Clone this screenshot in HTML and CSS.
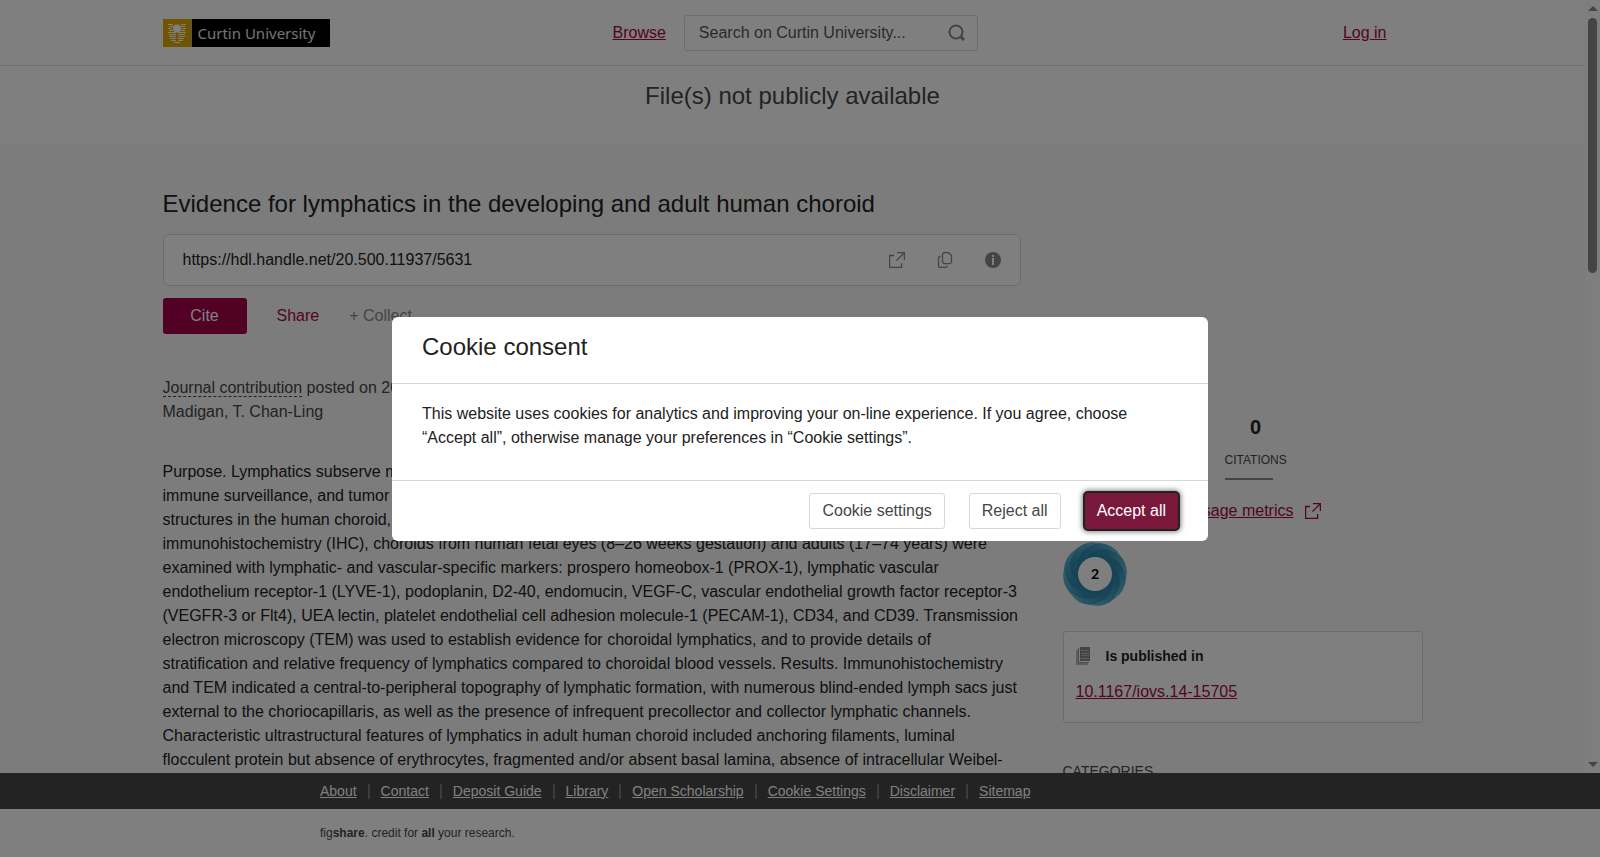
FILE: index.html
```html
<!DOCTYPE html>
<html lang="en">
<head>
    <meta charset="UTF-8">
    <meta name="viewport" content="width=device-width, initial-scale=1.0">
    <title>Evidence for lymphatics in the developing and adult human choroid</title>
    <link rel="stylesheet" href="styles.css">
</head>
<body>
    <div class="viewport">
        <div class="page">
            <header class="header">
                <div class="container header-row">
                    <a class="logo" href="#">
                        <svg class="logo-crest" viewBox="0 0 28 28" width="29" height="28">
                            <path fill="#fff" d="M5 5h5v1H5zM18 5h5v1h-5zM6 7h4v1H6zM18 7h4v1h-4zM5 9h4v1H5zM19 9h4v1h-4zM6 11h4v1H6zM18 11h4v1h-4zM5 13h8v1H5zM15 13h8v1h-8zM6 15h7v1H6zM15 15h7v1h-7zM6 17h7v1H6zM15 17h7v1h-7zM7 19h6v1H7zM15 19h6v1h-6zM8 21h5v1H8zM15 21h5v1h-5zM11 23h6v1h-6z"/>
                            <circle cx="14" cy="9.500" r="4" fill="#fff"/>
                        </svg>
                        <span class="logo-name">Curtin University</span>
                    </a>
                    <a class="link" href="#">Browse</a>
                    <form class="search">
                        <input type="text" aria-label="Search" placeholder="Search on Curtin University...">
                        <button type="submit" aria-label="Submit search">
                            <svg viewBox="0 0 18 18" width="18" height="18" fill="none" stroke="#888" stroke-width="2">
                                <circle cx="8" cy="8" r="6.500"/>
                                <path d="M12.500 12.500l3.500 3.500" stroke-width="3"/>
                            </svg>
                        </button>
                    </form>
                    <a class="link login" href="#">Log in</a>
                </div>
            </header>

            <div class="file-notice">File(s) not publicly available</div>

            <div class="container content">
                <main class="main">
                    <h1>Evidence for lymphatics in the developing and adult human choroid</h1>
                    <div class="handle">
                        <span class="handle-url">https://hdl.handle.net/20.500.11937/5631</span>
                        <button type="button" aria-label="Open link">
                            <svg viewBox="0 0 16 16" width="16" height="16" fill="none" stroke="#888" stroke-width="1.300">
                                <path d="M5 3.500H.6v11.900h12V11M8 .6h7.400V8M15.400 .6L7.500 8.500"/>
                            </svg>
                        </button>
                        <button type="button" aria-label="Copy link">
                            <svg viewBox="0 0 16 16" width="16" height="16" fill="none" stroke="#888" stroke-width="1.300">
                                <path d="M7 .6h4.500l3 3v6.500l-1.500 1.500H7L5.500 10V2zM3.500 4.500H2.500l-1 1v9l1 1H9l1-1v-1"/>
                            </svg>
                        </button>
                        <button type="button" aria-label="Information">
                            <svg viewBox="0 0 16 16" width="16" height="16">
                                <circle cx="8" cy="8" r="8" fill="#888"/>
                                <path fill="#fff" d="M7 3h2v2H7zM7 6h2v7H7z"/>
                            </svg>
                        </button>
                    </div>
                    <div class="actions">
                        <button type="button" class="cite">Cite</button>
                        <button type="button" class="share">Share</button>
                        <button type="button" class="collect">+ Collect</button>
                    </div>
                    <p class="meta"><span class="type">Journal contribution</span> posted on 2017-01-30, 10:45 authored by M. Koina, L. Baxter, S. Adamson, F. Arfuso, P. Hu, Madigan, T. Chan-Ling</p>
                    <p class="abstract">Purpose. Lymphatics subserve many important functions in the human body including maintenance of fluid homeostasis, immune surveillance, and tumor metastasis. Our aim was to provide structural and phenotypic evidence of lymphatic-like structures in the human choroid, including details of its morphology. Methods. Using multiple-marker immunohistochemistry (IHC), choroids from human fetal eyes (8–26 weeks gestation) and adults (17–74 years) were examined with lymphatic- and vascular-specific markers: prospero homeobox-1 (PROX-1), lymphatic vascular endothelium receptor-1 (LYVE-1), podoplanin, D2-40, endomucin, VEGF-C, vascular endothelial growth factor receptor-3 (VEGFR-3 or Flt4), UEA lectin, platelet endothelial cell adhesion molecule-1 (PECAM-1), CD34, and CD39. Transmission electron microscopy (TEM) was used to establish evidence for choroidal lymphatics, and to provide details of stratification and relative frequency of lymphatics compared to choroidal blood vessels. Results. Immunohistochemistry and TEM indicated a central-to-peripheral topography of lymphatic formation, with numerous blind-ended lymph sacs just external to the choriocapillaris, as well as the presence of infrequent precollector and collector lymphatic channels. Characteristic ultrastructural features of lymphatics in adult human choroid included anchoring filaments, luminal flocculent protein but absence of erythrocytes, fragmented and/or absent basal lamina, absence of intracellular Weibel-Palade bodies.</p>
                </main>

                <aside class="sidebar">
                    <div class="metrics">
                        <div class="metric"><strong>0</strong><span>VIEWS</span></div>
                        <div class="metric"><strong>0</strong><span>LOADS</span></div>
                        <div class="metric"><strong>0</strong><span>CITATIONS</span></div>
                    </div>
                    <div class="usage">
                        <a class="link" href="#">Usage metrics</a>
                        <svg viewBox="0 0 16 16" width="16" height="16" fill="none" stroke="#a6093d" stroke-width="1.300">
                            <path d="M5 3.500H.6v11.900h12V11M8 .6h7.400V8M15.400 .6L7.500 8.500"/>
                        </svg>
                    </div>
                    <svg class="badge" viewBox="0 0 64 64" width="64" height="64">
                        <defs>
                            <linearGradient id="petal" gradientUnits="userSpaceOnUse" x1="18" y1="26" x2="52" y2="6">
                                <stop offset="0" stop-color="#2a86ac"/>
                                <stop offset="0.400" stop-color="#348fb2"/>
                                <stop offset="1" stop-color="#58b4d0"/>
                            </linearGradient>
                            <path id="arm" fill="url(#petal)" d="M15 32A24 24 0 0 1 36 1A26 26 0 0 1 57 13A24 24 0 0 0 20 20Z"/>
                        </defs>
                        <circle cx="32" cy="32" r="28" fill="#3998bb"/>
                        <use href="#arm"/>
                        <use href="#arm" transform="rotate(45 32 32)"/>
                        <use href="#arm" transform="rotate(90 32 32)"/>
                        <use href="#arm" transform="rotate(135 32 32)"/>
                        <use href="#arm" transform="rotate(180 32 32)"/>
                        <use href="#arm" transform="rotate(225 32 32)"/>
                        <use href="#arm" transform="rotate(270 32 32)"/>
                        <use href="#arm" transform="rotate(315 32 32)"/>
                        <circle cx="32" cy="32" r="17" fill="#fff"/>
                        <text x="32" y="37" text-anchor="middle">2</text>
                    </svg>
                    <section class="published">
                        <h2>
                            <svg viewBox="0 0 15 18" width="15" height="18">
                                <path fill="#bbb" d="M0 3h2v13h10v2H0z"/>
                                <path fill="#999" d="M2 1h1v14h10v1H2z"/>
                                <path fill="#888" d="M4 0h10v14H4z"/>
                                <path stroke="#bbb" d="M5 3.500h8M5 6.500h8M5 8.500h8M5 11.500h8"/>
                            </svg>
                            Is published in
                        </h2>
                        <a class="link" href="#">10.1167/iovs.14-15705</a>
                    </section>
                    <h2 class="categories">CATEGORIES</h2>
                </aside>
            </div>
        </div>
        <div class="scrollbar">
            <span class="arrow up"></span>
            <span class="thumb"></span>
            <span class="arrow down"></span>
        </div>
    </div>

    <footer>
        <div class="footer-links">
            <ul>
                <li><a href="#">About</a></li>
                <li><a href="#">Contact</a></li>
                <li><a href="#">Deposit Guide</a></li>
                <li><a href="#">Library</a></li>
                <li><a href="#">Open Scholarship</a></li>
                <li><a href="#">Cookie Settings</a></li>
                <li><a href="#">Disclaimer</a></li>
                <li><a href="#">Sitemap</a></li>
            </ul>
        </div>
        <p class="credit">fig<b>share</b>. credit for <b>all</b> your research.</p>
    </footer>

    <div class="overlay">
        <div class="modal" role="dialog" aria-labelledby="cookie-title">
            <h2 id="cookie-title">Cookie consent</h2>
            <p>This website uses cookies for analytics and improving your on-line experience. If you agree, choose “Accept all”, otherwise manage your preferences in “Cookie settings”.</p>
            <div class="modal-footer">
                <button type="button">Cookie settings</button>
                <button type="button">Reject all</button>
                <button type="button" class="accept">Accept all</button>
            </div>
        </div>
    </div>
</body>
</html>
```
FILE: styles.css
```css
* {
    box-sizing: border-box;
}

body {
    margin: 0;
    height: 100vh;
    display: flex;
    flex-direction: column;
    background: #fff;
    color: #222;
    font-family: "Liberation Sans", Arial, sans-serif;
    font-size: 16px;
    line-height: 24px;
}

h1, h2, p, ul {
    margin: 0;
    padding: 0;
}

svg {
    display: block;
    flex: none;
}

button, input {
    font: inherit;
    color: inherit;
}

button {
    padding: 0;
    border: 0;
    background: none;
    cursor: pointer;
}

.viewport {
    flex: 1;
    min-height: 0;
    display: flex;
    overflow: hidden;
}

.page {
    flex: 1;
    overflow: hidden;
    background: #f8f8f8;
}

.container {
    max-width: 1260px;
    margin: 0 auto;
}

.link {
    color: #a6093d;
}

/* Header */

.header {
    background: #fff;
    border-bottom: 1px solid #d8d8d8;
}

.header-row {
    display: flex;
    align-items: center;
    height: 65px;
    padding-right: 36px;
}

.logo {
    display: flex;
    width: 167px;
    height: 28px;
    margin-right: 283px;
    background: #000;
    color: #e8e8e8;
    text-decoration: none;
}

.logo-crest {
    background: #e2a900;
    border-right: 1px solid #aaa;
}

.logo-name {
    padding-left: 6px;
    font-family: "Noto Sans", sans-serif;
    font-size: 15px;
    line-height: 28px;
    white-space: nowrap;
}

.search {
    display: flex;
    align-items: center;
    width: 294px;
    height: 36px;
    margin-left: 18px;
    padding: 0 11px 0 14px;
    border: 1px solid #d8d8d8;
    border-radius: 3px;
}

.search input {
    flex: 1;
    min-width: 0;
    padding: 0;
    border: 0;
    background: none;
}

.search input::placeholder {
    color: #555;
    opacity: 1;
}

.login {
    margin-left: auto;
}

.file-notice {
    padding: 12px 0 30px;
    background: #fff;
    color: #464646;
    font-size: 24px;
    line-height: 36px;
    text-align: center;
}

/* Item */

.content {
    display: flex;
    gap: 42px;
    padding-top: 42px;
}

.main {
    flex: 1;
    min-width: 0;
}

h1 {
    font-size: 24px;
    font-weight: normal;
    line-height: 36px;
}

.handle {
    display: flex;
    align-items: center;
    gap: 32px;
    height: 52px;
    margin-top: 12px;
    padding: 0 19px;
    background: #fff;
    border: 1px solid #d8d8d8;
    border-radius: 6px;
}

.handle-url {
    flex: 1;
}

.actions {
    display: flex;
    gap: 30px;
    margin-top: 12px;
    line-height: 36px;
}

.cite {
    width: 84px;
    background: #a6004a;
    border-radius: 3px;
    color: #fff;
}

.share {
    color: #a6093d;
}

.collect {
    color: #888;
}

.meta {
    margin-top: 42px;
    color: #464646;
}

.type {
    border-bottom: 1px dashed #464646;
}

.abstract {
    margin-top: 36px;
}

/* Sidebar */

.sidebar {
    flex: 0 0 360px;
    padding-top: 229px;
}

.metrics {
    display: grid;
    grid-template-columns: 81px 81px auto;
    justify-content: start;
}

.metric strong {
    display: block;
    font-size: 20px;
    text-align: center;
}

.metric span {
    display: block;
    margin-top: 9px;
    color: #464646;
    font-size: 12px;
}

.metric::after {
    content: "";
    display: block;
    width: 48px;
    height: 2px;
    margin-top: 6px;
    background: #888;
}

.usage {
    display: flex;
    justify-content: flex-end;
    align-items: center;
    gap: 11px;
    margin-top: 19px;
    padding-right: 102px;
}

.badge {
    margin-top: 19px;
}

.badge text {
    font-family: Lato, sans-serif;
    font-size: 14px;
    font-weight: bold;
}

.published {
    margin-top: 25px;
    padding: 12px 12px 18px;
    background: #fff;
    border: 1px solid #d8d8d8;
    border-radius: 3px;
}

.published h2 {
    display: flex;
    align-items: center;
    gap: 15px;
    margin-bottom: 12px;
    font-size: 14px;
}

.categories {
    margin-top: 36px;
    color: #464646;
    font-size: 14px;
    font-weight: normal;
}

/* Scrollbar */

.scrollbar {
    display: flex;
    flex-direction: column;
    align-items: center;
    width: 15px;
    padding: 6px 0;
    background: #fcfcfc;
}

.arrow {
    border: 0 solid transparent;
    border-width: 0 5px;
}

.up {
    border-bottom: 5px solid #888;
}

.down {
    margin-top: auto;
    border-top: 5px solid #888;
}

.thumb {
    width: 9px;
    height: 255px;
    margin-top: 7px;
    background: #888;
    border-radius: 5px;
}

/* Footer */

.footer-links {
    background: #464646;
}

.footer-links ul {
    display: flex;
    align-items: center;
    max-width: 960px;
    height: 36px;
    margin: 0 auto;
    list-style: none;
    font-size: 14px;
    line-height: 15px;
}

.footer-links li + li {
    margin-left: 11px;
    padding-left: 11px;
    border-left: 2px solid #777;
}

.footer-links a {
    color: #fff;
}

.credit {
    max-width: 960px;
    margin: 0 auto;
    color: #464646;
    font-size: 12px;
    line-height: 48px;
}

/* Cookie dialog */

.overlay {
    position: fixed;
    inset: 0;
    display: flex;
    justify-content: center;
    align-items: center;
    background: rgba(0, 0, 0, 0.5);
}

.modal {
    width: 816px;
    background: #fff;
    border-radius: 6px;
}

.modal h2 {
    padding: 12px 30px 18px;
    border-bottom: 1px solid #d8d8d8;
    font-size: 24px;
    font-weight: normal;
    line-height: 36px;
}

.modal p {
    padding: 18px 30px 30px;
}

.modal-footer {
    display: flex;
    justify-content: flex-end;
    gap: 24px;
    padding: 12px 30px;
    border-top: 1px solid #d8d8d8;
}

.modal-footer button {
    height: 36px;
    padding: 0 12px;
    border: 1px solid #d8d8d8;
    border-radius: 3px;
    color: #464646;
}

.modal-footer .accept {
    background: #7a183c;
    border: 0;
    box-shadow: 0 0 0 2px #222, 0 0 5px 3px rgba(0, 0, 0, 0.5);
    color: #fff;
}
```
